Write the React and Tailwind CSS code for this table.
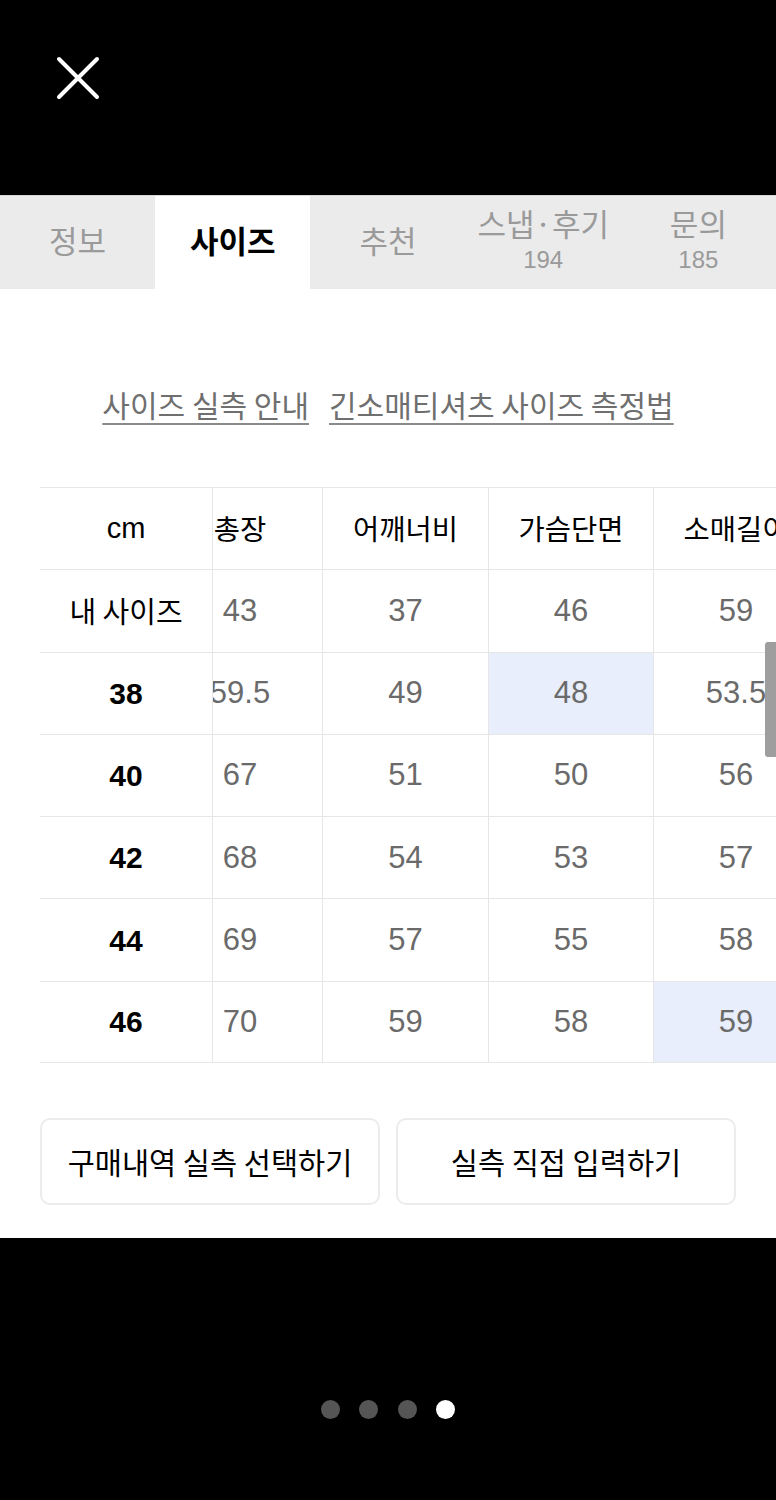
const tabs = [
  { label: "정보" },
  { label: "사이즈", active: true },
  { label: "추천" },
  { label: "스냅·후기", count: "194" },
  { label: "문의", count: "185" },
];

const columns = ["총장", "어깨너비", "가슴단면", "소매길이"];
const colWidths = ["w-[165px]", "w-[166px]", "w-[165px]", "w-[165px]"];

const rows = [
  { label: "내 사이즈", mine: true, values: ["43", "37", "46", "59"] },
  { label: "38", values: ["59.5", "49", "48", "53.5"], hi: 2 },
  { label: "40", values: ["67", "51", "50", "56"] },
  { label: "42", values: ["68", "54", "53", "57"] },
  { label: "44", values: ["69", "57", "55", "58"] },
  { label: "46", values: ["70", "59", "58", "59"], hi: 3 },
];

const TableRow = ({ label, labelClass, cells, cellClass, hi, last }) => (
  <div className={`flex h-[82.3px] border-t border-[#e6e6e6] ${last ? "border-b" : ""}`}>
    <div className={`w-[173px] shrink-0 border-r border-[#e6e6e6] flex items-center justify-center ${labelClass}`}>
      {label}
    </div>
    <div className="flex-1 overflow-hidden">
      <div className="flex h-full -ml-[55px]">
        {cells.map((c, i) => (
          <div
            key={i}
            className={`${colWidths[i]} shrink-0 h-full border-r border-[#e6e6e6] flex items-center justify-center ${cellClass} ${hi === i ? "bg-[#e8eefb]" : ""}`}
          >
            {c}
          </div>
        ))}
      </div>
    </div>
  </div>
);

export default function App() {
  return (
    <div className="w-[776px] h-[1500px] bg-black font-['Liberation_Sans','Noto_Sans_CJK_KR',sans-serif] flex flex-col">
      {/* top bar with close */}
      <div className="h-[195px] pl-[55px] pt-[55px]">
        <svg width="46" height="46" viewBox="0 0 46 46">
          <path d="M4 4 L42 42 M42 4 L4 42" stroke="white" strokeWidth="4" strokeLinecap="round" fill="none" />
        </svg>
      </div>

      {/* tabs */}
      <div className="h-[94px] bg-[#ebebeb] border-t border-[#d8d8d8] grid grid-cols-5">
        {tabs.map((t) => (
          <div
            key={t.label}
            className={`flex flex-col items-center justify-center pb-[6px] ${t.active ? "bg-white text-black font-bold" : "text-[#9a9a9a]"}`}
          >
            <span className="text-[31px] leading-[36px] font-['Noto_Sans_CJK_KR',sans-serif]">{t.label}</span>
            {t.count && <span className="text-[24px] leading-[28px] mt-[5px]">{t.count}</span>}
          </div>
        ))}
      </div>

      {/* content */}
      <div className="bg-white pt-[95px] pb-[33px]">
        <div className="flex justify-center gap-[20px] text-[30px] leading-[40px] text-[#6f6f6f] font-['Noto_Sans_CJK_KR',sans-serif]">
          <span className="underline underline-offset-[6px] decoration-[#8a8a8a] decoration-2">사이즈 실측 안내</span>
          <span className="underline underline-offset-[6px] decoration-[#8a8a8a] decoration-2">긴소매티셔츠 사이즈 측정법</span>
        </div>

        <div className="relative ml-[40px] mt-[63px]">
          <TableRow
            label="cm"
            labelClass="text-[29px] text-black"
            cells={columns}
            cellClass="text-[28.5px] text-black font-['Noto_Sans_CJK_KR',sans-serif]"
          />
          {rows.map((r, i) => (
            <TableRow
              key={r.label}
              label={r.label}
              labelClass={r.mine ? "text-[29px] text-black font-['Noto_Sans_CJK_KR',sans-serif]" : "text-[30px] font-bold text-black"}
              cells={r.values}
              cellClass="text-[31px] text-[#6a6a6a]"
              hi={r.hi}
              last={i === rows.length - 1}
            />
          ))}
          <div className="absolute right-0 top-[155px] w-[11px] h-[115px] bg-[#9e9e9e] rounded-l-[3px]" />
        </div>

        <div className="grid grid-cols-2 gap-[16px] mx-[40px] mt-[55px]">
          <button className="h-[87px] border-2 border-[#ececec] rounded-[10px] text-[29.5px] text-black font-['Noto_Sans_CJK_KR',sans-serif]">
            구매내역 실측 선택하기
          </button>
          <button className="h-[87px] border-2 border-[#ececec] rounded-[10px] text-[29.5px] text-black font-['Noto_Sans_CJK_KR',sans-serif]">
            실측 직접 입력하기
          </button>
        </div>
      </div>

      {/* pager dots */}
      <div className="flex-1 flex justify-center pt-[162px] gap-[19.5px]">
        <span className="w-[19px] h-[19px] rounded-full bg-[#555]" />
        <span className="w-[19px] h-[19px] rounded-full bg-[#555]" />
        <span className="w-[19px] h-[19px] rounded-full bg-[#555]" />
        <span className="w-[19px] h-[19px] rounded-full bg-white" />
      </div>
    </div>
  );
}
